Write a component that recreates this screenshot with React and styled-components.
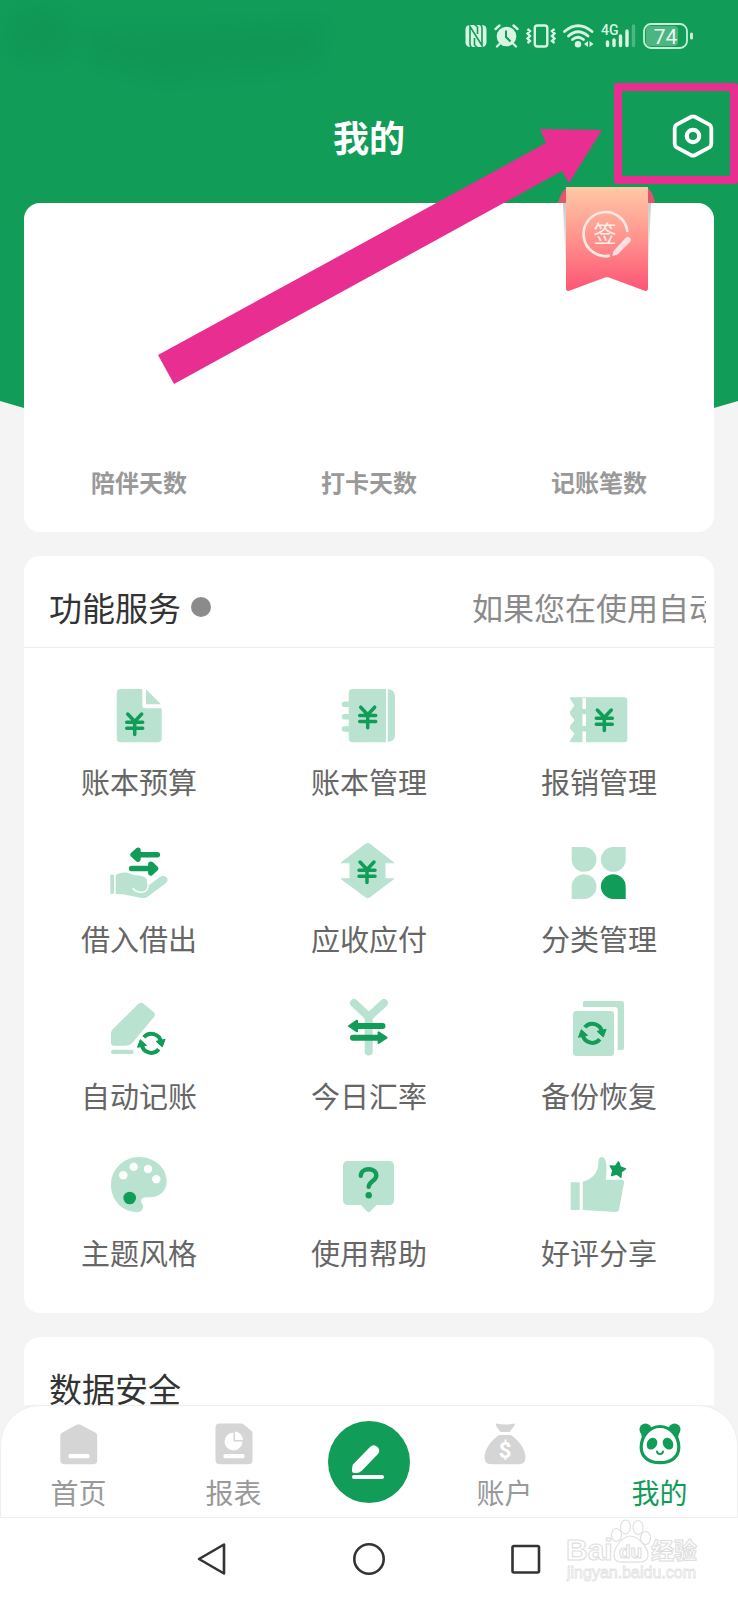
import React from "react";
import styled, { createGlobalStyle } from "styled-components";

const GREEN = "#119c58";
const MINT = "#b9e2d0";
const PINK = "#e82e90";
const STATUS = "#d8f5e4";

const GlobalStyle = createGlobalStyle`
  * {
    box-sizing: border-box;
  }
  body {
    margin: 0;
    background: #f4f4f5;
    font-family: "Noto Sans CJK SC", "Noto Sans", sans-serif;
  }
  button {
    border: 0;
    padding: 0;
    background: none;
    font: inherit;
    cursor: pointer;
  }
  svg {
    display: block;
  }
`;

const PageWrapper = styled.div`
  position: relative;
  min-height: 100vh;
  display: flex;
  flex-direction: column;
  overflow: hidden;
`;

const HeroBackground = styled.div`
  position: absolute;
  z-index: -1;
  top: 0;
  left: 0;
  right: 0;
  height: 508px;
  background-color: ${GREEN};
  clip-path: polygon(0 0, 100% 0, 100% 401px, 50% 508px, 0 401px);
`;

const StatusBar = styled.div`
  height: 72px;
  padding-right: 44px;
  display: flex;
  align-items: center;
  justify-content: flex-end;
  gap: 7px;
`;

const TitleBar = styled.header`
  height: 131px;
  padding: 0 24px 3px;
  display: grid;
  grid-template-columns: 1fr auto 1fr;
  align-items: center;

  h1 {
    grid-column: 2;
    margin: 0;
    color: #fff;
    font-size: 36px;
    line-height: 48px;
    font-weight: 700;
  }
  button {
    justify-self: end;
  }
`;

const Content = styled.main`
  flex: 1;
  padding: 0 24px;
  display: flex;
  flex-direction: column;
  gap: 24px;
`;

const Card = styled.section`
  position: relative;
  background-color: #fff;
  border-radius: ${(props) => (props.$cut ? "16px 16px 0 0" : "16px")};
  flex: ${(props) => (props.$cut ? "1" : "none")};
`;

const StatsRow = styled.div`
  padding: 261px 0 32px;
  display: grid;
  grid-template-columns: repeat(3, 1fr);
  color: #999;
  font-size: 24px;
  line-height: 36px;
  font-weight: 700;
  text-align: center;
`;

const RibbonButton = styled.button`
  position: absolute;
  top: -17px;
  right: 58px;
`;

const CardHeader = styled.div`
  padding: ${(props) => (props.$line ? "34px 8px 23px 25px" : "34px 25px 0")};
  display: flex;
  align-items: center;
  border-bottom: ${(props) => (props.$line ? "1px solid #ececec" : "0")};

  h2 {
    margin: 0;
    color: #333;
    font-size: 33px;
    line-height: 34px;
    font-weight: 400;
  }
  .dot {
    width: 20px;
    height: 20px;
    margin-left: 10px;
    border-radius: 50%;
    background-color: #8b8b8b;
  }
  .notice {
    width: 234px;
    margin-left: auto;
    overflow: hidden;
    white-space: nowrap;
    color: #8a8a8a;
    font-size: 31px;
    line-height: 34px;
  }
`;

const ServiceGrid = styled.div`
  padding: 38px 0 41px;
  display: grid;
  grid-template-columns: repeat(3, 1fr);
  row-gap: 42px;
`;

const ServiceButton = styled.button`
  display: flex;
  flex-direction: column;
  align-items: center;
  gap: 15px;
  color: #666;
  font-size: 29px;
  line-height: 40px;
`;

const TabBar = styled.nav`
  height: 113px;
  display: grid;
  grid-template-columns: 1fr 1fr 116px 1fr 1fr;
  background-color: #fff;
  border: 1px solid #efefef;
  border-radius: 40px 40px 0 0;
`;

const TabButton = styled.button`
  padding-top: 17px;
  display: flex;
  flex-direction: column;
  align-items: center;
  gap: 7px;
  color: ${(props) => (props.$active ? GREEN : "#999")};
  font-size: 28px;
  line-height: 40px;
`;

const AddButton = styled.button`
  width: 82px;
  height: 82px;
  margin-top: 15px;
  justify-self: center;
  display: flex;
  align-items: center;
  justify-content: center;
  border-radius: 50%;
  background-color: ${GREEN};
`;

const SystemBar = styled.div`
  position: relative;
  height: 82px;
  display: flex;
  align-items: center;
  justify-content: center;
  gap: 124px;
  background-color: #fff;
`;

const Smear = styled.svg`
  position: absolute;
  top: 0;
  left: 0;
`;

const Highlight = styled.div`
  position: absolute;
  top: 83px;
  right: 0;
  width: 124px;
  height: 101px;
  border: 8px solid ${PINK};
  border-radius: 3px;
  pointer-events: none;
`;

const ArrowMark = styled.svg`
  position: absolute;
  top: 125px;
  right: 134px;
  pointer-events: none;
`;

const WatermarkSvg = styled.svg`
  position: absolute;
  right: 32px;
  top: 0;
`;

const Yen = ({ x, y }) => (
  <path
    transform={`translate(${x} ${y})`}
    d="M-7 1.5 0 9 7 1.5M-8 9.7H8M-8 15.7H8M0 9V22"
    fill="none"
    stroke={GREEN}
    strokeWidth="3.5"
    strokeLinecap="round"
    strokeLinejoin="round"
  />
);

const Sync = ({ x, y }) => (
  <g transform={`translate(${x} ${y})`}>
    <g fill="none" stroke={GREEN} strokeWidth="4">
      <path d="M-7.5-6A9.7 9.7 0 0 1 9.6-1" />
      <path d="M7.5 6A9.7 9.7 0 0 1-9.6 1" />
    </g>
    <g fill={GREEN} stroke={GREEN} strokeLinejoin="round">
      <path d="M13.8-4 4.8-2 11 3.6Z" />
      <path d="M-13.8 4-4.8 2-11-3.6Z" />
    </g>
  </g>
);

const services = [
  {
    label: "账本预算",
    icon: (
      <>
        <path
          fill={MINT}
          d="M12 3H33.3V19.3Q33.3 22.3 36.3 22.3H52.7V52Q52.7 56.3 48.4 56.3H12Q7.7 56.3 7.7 52V7.3Q7.7 3 12 3Z"
        />
        <path fill={MINT} d="M37 3.3 52 18.3H37Z" />
        <Yen x={25.7} y={26.5} />
      </>
    ),
  },
  {
    label: "账本管理",
    icon: (
      <>
        <path
          fill={MINT}
          d="M14 3H47V56.3H14Q9.7 56.3 9.7 52V7.3Q9.7 3 14 3ZM48.8 3Q56 4 56 10V49Q56 55 48.8 56.3Z"
        />
        <path
          stroke={MINT}
          strokeWidth="5.6"
          strokeLinecap="round"
          d="M5.5 18.3H12M5.5 30.7H12M5.5 43H12"
        />
        <Yen x={28.7} y={19.7} />
      </>
    ),
  },
  {
    label: "报销管理",
    icon: (
      <>
        <path
          fill={MINT}
          d="M1 11.3H55Q58.3 11.3 58.3 14.6V53Q58.3 56.3 55 56.3H1V54.5L5.5 48 1 42.5V40L5.5 34 1 28V25.5L5.5 19.5 1 13Z"
        />
        <path stroke="#fff" strokeWidth="3.6" d="M15.2 12.3V23M15.2 28.3V40M15.2 45.5V56.3" />
        <Yen x={35.3} y={22.5} />
      </>
    ),
  },
  {
    label: "借入借出",
    icon: (
      <>
        <path
          fill={MINT}
          d="M1.3 31.7H5V50.7H1.3ZM6.7 32.3C11 29 17 28.8 22 31C27 33.2 32 31.5 36 34.5C39 37 40 40 39 43L50 34.5C53.5 31.5 58.3 33 58.6 36.5C58.6 38.5 57 40.2 55 41.6L39 53.5C37 55 34 55.3 31 54.7L14 51.3 6.7 51Z"
        />
        <path
          fill="none"
          stroke="#fff"
          strokeWidth="1.4"
          strokeLinecap="round"
          d="M24 45.5C28 50.5 36 50.5 38.3 46C39.4 43.6 39.6 41 38.4 38"
        />
        <g fill="none" stroke={GREEN} strokeWidth="5.4" strokeLinecap="round" strokeLinejoin="round">
          <path d="M48.4 11.7H24.5M29 7.3 24 11.7 29 16.1Z" />
          <path d="M22.6 25.5H46.5M41.8 21.1 46.6 25.5 41.8 29.9Z" />
        </g>
      </>
    ),
  },
  {
    label: "应收应付",
    icon: (
      <>
        <path
          fill={MINT}
          stroke={MINT}
          strokeLinejoin="round"
          d="M26.4 1.3Q28.7-.5 31 1.3L54.8 19.8H46V35.8H54.8L31 53.8Q28.7 55.8 26.4 53.8L2.2 35.8H11V19.8H2.2Z"
        />
        <Yen x={28} y={17.5} />
      </>
    ),
  },
  {
    label: "分类管理",
    icon: (
      <>
        <path
          fill={MINT}
          d="M2.7 4H15.2A12.4 12.4 0 1 1 2.7 16.4ZM56.7 4V16.4A12.4 12.4 0 1 1 44.3 4ZM2.7 56V43.6A12.4 12.4 0 1 1 15.2 56Z"
        />
        <path fill={GREEN} d="M56.7 56H44.3A12.4 12.4 0 1 1 56.7 43.6Z" />
      </>
    ),
  },
  {
    label: "自动记账",
    icon: (
      <>
        <path
          fill={MINT}
          d="M3.5 29.5 29 4.3Q32 1.5 35 4.2L44.3 11.8Q47.4 14.6 44.6 17.6L24 42Q21 45.8 16 45.8H5Q2 45.8 2 42.8V33Q2 31 3.5 29.5Z"
        />
        <rect fill={MINT} x="2" y="49.7" width="22.7" height="4.4" rx="2.2" />
        <Sync x={42.3} y={43.3} />
      </>
    ),
  },
  {
    label: "今日汇率",
    icon: (
      <>
        <path
          fill="none"
          stroke={MINT}
          strokeWidth="8"
          strokeLinecap="round"
          strokeLinejoin="round"
          d="M15 3 29.7 17 45 3M29.7 17V51.5"
        />
        <path stroke={GREEN} strokeWidth="6" strokeLinecap="round" d="M17 26H43.5M14 37.7H42" />
        <g fill={GREEN} stroke={GREEN} strokeWidth="2" strokeLinejoin="round">
          <path d="M10 26 18 20.7V31.3Z" />
          <path d="M47.6 37.7 39.6 32.4V43Z" />
        </g>
      </>
    ),
  },
  {
    label: "备份恢复",
    icon: (
      <>
        <rect fill={MINT} x="4" y="11" width="41" height="45" rx="3.5" />
        <path
          fill={MINT}
          d="M14 7V3Q14 1 16 1H52.5Q55 1 55 3.5V48Q55 50 53 50H48.7V10Q48.7 7 45.7 7Z"
        />
        <Sync x={23.3} y={33.3} />
      </>
    ),
  },
  {
    label: "主题风格",
    icon: (
      <>
        <path
          fill={MINT}
          d="M30 0C45.5 0 57.7 11 57.7 24C57.7 33.5 51 40.2 41.5 40.2H37C32.5 40.2 31.2 43.5 33 46.5C35.5 50.5 33 55.2 28.5 55.2C13 55 2 43 2 28C2 12.5 14.5 0 30 0Z"
        />
        <g fill="#fff">
          <circle cx="14.3" cy="18.2" r="4.2" />
          <circle cx="24.7" cy="9.9" r="4.2" />
          <circle cx="39" cy="12" r="4.2" />
          <circle cx="47.3" cy="22.3" r="4.2" />
        </g>
        <circle fill={GREEN} cx="20.7" cy="41" r="6.3" />
      </>
    ),
  },
  {
    label: "使用帮助",
    icon: (
      <>
        <path
          fill={MINT}
          d="M9 4H50Q55 4 55 9V43Q55 48 50 48H37.5L31.5 54.3Q29.7 56 27.9 54.3L22 48H9Q4 48 4 43V9Q4 4 9 4Z"
        />
        <path
          fill="none"
          stroke={GREEN}
          strokeWidth="4.4"
          strokeLinecap="round"
          d="M21.8 18.8C21.8 10.2 37.3 10.2 37.3 18.4C37.3 24 29.7 24.5 29.7 29.8"
        />
        <circle fill={GREEN} cx="29.7" cy="38.3" r="3.2" />
      </>
    ),
  },
  {
    label: "好评分享",
    icon: (
      <>
        <path
          fill={MINT}
          d="M1.7 25.2H10.7V53H1.7ZM13.7 24.7C22 22.5 28.5 17 29.3 8C29.3 3 30 0 32.5 0C37.5 0 38.5 9 36.7 22.8H52.5Q55.5 22.8 55 26L50 52.5Q49.5 55.2 46.5 55L13.7 53Z"
        />
        <path
          fill={GREEN}
          stroke={GREEN}
          strokeWidth="1.4"
          strokeLinejoin="round"
          d="M49.5 4.8 51.3 9.8 56.6 11.8 52.2 15 52 20.2 47.6 17 42.6 18.6 43.8 13.4 41.2 9 46.4 9.2Z"
        />
      </>
    ),
  },
];

const Ribbon = () => (
  <svg width="100" height="108" viewBox="0 0 100 108">
    <defs>
      <linearGradient id="ribbon" x1="0" y1="0" x2="0" y2="1">
        <stop offset="0" stopColor="#ffc9a6" />
        <stop offset=".5" stopColor="#ff928c" />
        <stop offset="1" stopColor="#fd5575" />
      </linearGradient>
      <linearGradient id="ribbonShade" x1="0" y1="0" x2="0" y2="1">
        <stop offset="0" stopColor="#c9cccb" />
        <stop offset="1" stopColor="#faf8f8" />
      </linearGradient>
    </defs>
    <path fill="url(#ribbonShade)" d="M7 17H95L92 90H10Z" />
    <path fill="#e0566f" d="M10 2Q5 6 2 17H10ZM92 2Q97 6 99 17H92Z" />
    <path
      fill="url(#ribbon)"
      d="M10 1H92V102Q92 106 88 104.5L53 91.5Q51 91 49 91.5L14 104.5Q10 106 10 102Z"
    />
    <path fill="none" stroke="#ffe9e4" strokeWidth="2.7" d="M71.5 46A22 22 0 1 0 54 69.6" />
    <path
      fill="#ffdfe2"
      d="M70 51.5Q71.5 50 73.5 51.5L74.5 52.5Q75.5 54 74.5 55.5L62.5 67.5Q61.5 69 56.5 70Q56.5 66 58 64.5Z"
    />
    <text x="49" y="56" fill="#fff0ea" fontSize="23" fontWeight="400" textAnchor="middle">
      签
    </text>
  </svg>
);

const StatusIcons = () => (
  <>
    <svg width="22" height="24" viewBox="0 0 22 24">
      <rect x=".5" y="1" width="21" height="22" rx="4.5" fill={STATUS} />
      <path
        fill="none"
        stroke={GREEN}
        strokeWidth="1.6"
        d="M7.5 24Q5 23 5 20V2.5L17 21.5V4Q17 1 14.5 0M9.5 14V21L13 24M12.5 10V3L9 0"
      />
    </svg>
    <svg width="25" height="24" viewBox="0 0 25 24">
      <circle cx="12.5" cy="12.5" r="9.8" fill={STATUS} />
      <path
        fill="none"
        stroke={STATUS}
        strokeWidth="2.4"
        strokeLinecap="round"
        d="M1.5 5 5.5 1.5M23.5 5 19.5 1.5M5.5 20 3 22.5M19.5 20 22 22.5"
      />
      <path fill="none" stroke={GREEN} strokeWidth="2" d="M12 6.5V13L16.5 17.5" />
    </svg>
    <svg width="30" height="24" viewBox="0 0 30 24">
      <g fill="none" stroke={STATUS} strokeWidth="2.4">
        <rect x="8.8" y="1.5" width="12.5" height="21" rx="2.5" />
        <path d="M1.5 5 4 7 1.5 9.5 4 12 1.5 14.5 4 17 1.5 19M28.5 5 26 7 28.5 9.5 26 12 28.5 14.5 26 17 28.5 19" />
      </g>
    </svg>
    <svg width="31" height="24" viewBox="0 0 31 24">
      <g fill="none" stroke={STATUS} strokeWidth="2.8" strokeLinecap="round">
        <path d="M1.5 7.5Q15-4 29 7.5" />
        <path d="M5.5 12Q15 3.5 25 12" />
        <path d="M9.5 15.5Q15 11 20.5 15.5" />
      </g>
      <circle cx="15" cy="20.3" r="3.2" fill={STATUS} />
      <path fill={STATUS} d="M25 17V23L21 20ZM26.5 17V23L30.5 20Z" />
    </svg>
    <svg width="35" height="24" viewBox="0 0 35 24" overflow="visible">
      <text x="0" y="11" fill={STATUS} fontSize="14" fontWeight="500" fontFamily="Roboto, sans-serif">
        4G
      </text>
      <g stroke={STATUS} strokeWidth="3.4" strokeLinecap="round">
        <path d="M6.5 18V21.5M13 16V21.5M19.5 12V21.5M26 7V21.5" />
        <path opacity=".3" d="M32.5 2V21.5" />
      </g>
    </svg>
    <svg width="51" height="26" viewBox="0 0 51 26">
      <rect x="3" y="3" width="32" height="20" rx="4" fill="#fff" opacity=".25" />
      <rect x="1" y="1" width="43" height="24" rx="7" fill="none" stroke="#c4efd6" strokeWidth="1.8" />
      <path stroke="#c4efd6" strokeWidth="3" strokeLinecap="round" d="M48.5 11V15" />
      <text
        x="22.5"
        y="20.5"
        fill="#e6faef"
        fontSize="21"
        fontFamily="Roboto, sans-serif"
        textAnchor="middle"
      >
        74
      </text>
    </svg>
  </>
);

const HomeIcon = () => (
  <svg width="42" height="42" viewBox="0 0 42 42">
    <path
      fill="#d5d5d5"
      d="M18.5 1.8Q20.5.8 22.5 1.8L37.5 9.8Q39.2 10.8 39.2 13V37Q39.2 41.3 35 41.3H6.5Q2.3 41.3 2.3 37V13Q2.3 10.8 4 9.8Z"
    />
    <rect x="10.5" y="31" width="21" height="4.2" rx="1.5" fill="#fff" />
  </svg>
);

const ReportIcon = () => (
  <svg width="42" height="42" viewBox="0 0 42 42">
    <path
      fill="#d5d5d5"
      d="M6.5.5H28Q29.5.5 30.5 1.3L38 7.5Q39.5 8.7 39.5 10.5V37Q39.5 41.3 35.2 41.3H6.8Q2.5 41.3 2.5 37V4.8Q2.5.5 6.5.5Z"
    />
    <path
      fill="#fff"
      d="M20.5 9.5V18.5H29.5A9 9 0 1 1 20.5 9.5ZM22 8.5A8.6 8.6 0 0 1 30 17H22Z"
    />
    <rect x="10.5" y="31" width="21" height="4.2" rx="1.5" fill="#fff" />
  </svg>
);

const AccountIcon = () => (
  <svg width="42" height="42" viewBox="0 0 42 42">
    <path
      fill="#d5d5d5"
      d="M12 .5Q21.5 2.5 31 .5Q31.5 2 25.5 9H16.5Q10.5 2 12 .5ZM15.5 12H26.5C33 15.5 41.5 25 41.5 34.5Q41.5 41.3 34.5 41.3H7.5Q.5 41.3.5 34.5C.5 25 9 15.5 15.5 12Z"
    />
    <text
      x="21"
      y="35"
      fill="#fff"
      fontSize="22"
      fontWeight="700"
      fontFamily="Roboto, sans-serif"
      textAnchor="middle"
    >
      $
    </text>
  </svg>
);

const PandaIcon = () => (
  <svg width="42" height="42" viewBox="0 0 42 42">
    <g fill={GREEN}>
      <circle cx="6.5" cy="6.5" r="6" />
      <circle cx="35.5" cy="6.5" r="6" />
      <path d="M.7 5 4 19 12 7ZM41.3 5 38 19 30 7Z" />
    </g>
    <path
      fill="#fff"
      stroke={GREEN}
      strokeWidth="3.2"
      d="M21 3.5C31.5 3.5 39.8 13 39.8 24.5C39.8 34 32 39.7 21 39.7S2.2 34 2.2 24.5C2.2 13 10.5 3.5 21 3.5Z"
    />
    <g fill={GREEN}>
      <ellipse cx="13" cy="20.7" rx="5" ry="6.2" transform="rotate(32 13 20.7)" />
      <ellipse cx="29" cy="20.7" rx="5" ry="6.2" transform="rotate(-32 29 20.7)" />
    </g>
    <path
      fill="none"
      stroke={GREEN}
      strokeWidth="2"
      strokeLinecap="round"
      d="M18 28.5Q18.5 31 21 31T24 28.5"
    />
  </svg>
);

const Watermark = () => (
  <WatermarkSvg width="140" height="70" viewBox="0 0 140 70">
    <g fill="#fff" stroke="#dedede" strokeWidth="1.1">
      <text x="0" y="42" fontSize="30" fontWeight="700" fontFamily="Liberation Sans, sans-serif">
        Bai
      </text>
      <ellipse cx="50.5" cy="17" rx="5" ry="6.5" />
      <ellipse cx="59.5" cy="9" rx="5" ry="7" />
      <ellipse cx="72" cy="9.5" rx="5" ry="7" />
      <ellipse cx="79.5" cy="20" rx="5" ry="6.5" />
      <path d="M64 18C72 18 82 29 82 37C82 46 72 44 64 44S48 46 48 37C48 29 57 18 64 18Z" />
      <text
        x="64.5"
        y="40"
        fontSize="19"
        textAnchor="middle"
        fontWeight="700"
        fontFamily="Liberation Sans, sans-serif"
      >
        du
      </text>
      <text x="85" y="41" fontSize="23" fontWeight="700">
        经验
      </text>
    </g>
    <text
      x="1"
      y="60"
      fill="#fff"
      stroke="#e2e2e2"
      strokeWidth=".8"
      fontSize="16"
      fontFamily="Liberation Sans, sans-serif"
    >
      jingyan.baidu.com
    </text>
  </WatermarkSvg>
);

const App = () => {
  return (
    <PageWrapper>
      <GlobalStyle />
      <HeroBackground>
        <Smear width="350" height="100" viewBox="0 0 350 100">
          <filter id="smear" x="-20%" y="-50%" width="140%" height="200%">
            <feGaussianBlur stdDeviation="7" />
          </filter>
          <g filter="url(#smear)" fill="#0c7d4a" opacity=".14">
            <ellipse cx="42" cy="35" rx="34" ry="26" />
            <path d="M80 30 325 24 315 66 160 80 95 62Z" />
          </g>
        </Smear>
      </HeroBackground>

      <StatusBar>
        <StatusIcons />
      </StatusBar>
      <TitleBar>
        <h1>我的</h1>
        <button type="button" aria-label="设置">
          <svg width="42" height="44" viewBox="0 0 42 44">
            <g fill="none" stroke="#fff" strokeLinejoin="round">
              <path
                strokeWidth="3.8"
                d="M18.8 3Q21 1.8 23.2 3L37.4 10.6Q39.3 11.8 39.3 14.2V29.8Q39.3 32.2 37.4 33.4L23.2 41Q21 42.2 18.8 41L4.6 33.4Q2.7 32.2 2.7 29.8V14.2Q2.7 11.8 4.6 10.6Z"
              />
              <circle cx="21" cy="22" r="6.2" strokeWidth="4.2" />
            </g>
          </svg>
        </button>
      </TitleBar>

      <Content>
        <Card>
          <StatsRow>
            <span>陪伴天数</span>
            <span>打卡天数</span>
            <span>记账笔数</span>
          </StatsRow>
          <RibbonButton type="button">
            <Ribbon />
          </RibbonButton>
        </Card>

        <Card>
          <CardHeader $line>
            <h2>功能服务</h2>
            <span className="dot" />
            <div className="notice">如果您在使用自动</div>
          </CardHeader>
          <ServiceGrid>
            {services.map((item) => (
              <ServiceButton type="button" key={item.label}>
                <svg width="60" height="60" viewBox="0 0 60 60" overflow="visible">
                  {item.icon}
                </svg>
                {item.label}
              </ServiceButton>
            ))}
          </ServiceGrid>
        </Card>

        <Card $cut>
          <CardHeader>
            <h2>数据安全</h2>
          </CardHeader>
        </Card>
      </Content>

      <TabBar>
        <TabButton type="button">
          <HomeIcon />
          首页
        </TabButton>
        <TabButton type="button">
          <ReportIcon />
          报表
        </TabButton>
        <AddButton type="button" aria-label="记一笔">
          <svg width="36" height="36" viewBox="0 0 36 36">
            <path
              fill="#fff"
              d="M2 20.5 18.5 3.5Q22.5-.5 26.5 3Q30 6.5 26.5 10.5L11 26.5Q8.5 29 5 29H3.5Q1 29 1 26.5Q1 22 2 20.5Z"
            />
            <rect x="1" y="31" width="32" height="4" rx="2" fill="#fff" />
          </svg>
        </AddButton>
        <TabButton type="button">
          <AccountIcon />
          账户
        </TabButton>
        <TabButton type="button" $active>
          <PandaIcon />
          我的
        </TabButton>
      </TabBar>

      <SystemBar>
        <button type="button" aria-label="返回">
          <svg width="32" height="34" viewBox="0 0 32 34">
            <path
              fill="none"
              stroke="#333"
              strokeWidth="2.6"
              strokeLinejoin="round"
              d="M28 2.5V31.5L3 17Z"
            />
          </svg>
        </button>
        <button type="button" aria-label="主屏幕">
          <svg width="34" height="34" viewBox="0 0 34 34">
            <circle cx="17" cy="17" r="14.7" fill="none" stroke="#333" strokeWidth="2.6" />
          </svg>
        </button>
        <button type="button" aria-label="最近任务">
          <svg width="32" height="34" viewBox="0 0 32 34">
            <rect
              x="2.5"
              y="4"
              width="26.5"
              height="26.5"
              rx="1.5"
              fill="none"
              stroke="#333"
              strokeWidth="2.6"
            />
          </svg>
        </button>
        <Watermark />
      </SystemBar>

      <ArrowMark width="446" height="260" viewBox="0 0 446 260">
        <path fill={PINK} d="M444 5 382 4 388 18 0 230 16 259 404 46 411 58Z" />
      </ArrowMark>
      <Highlight />
    </PageWrapper>
  );
};

export default App;
